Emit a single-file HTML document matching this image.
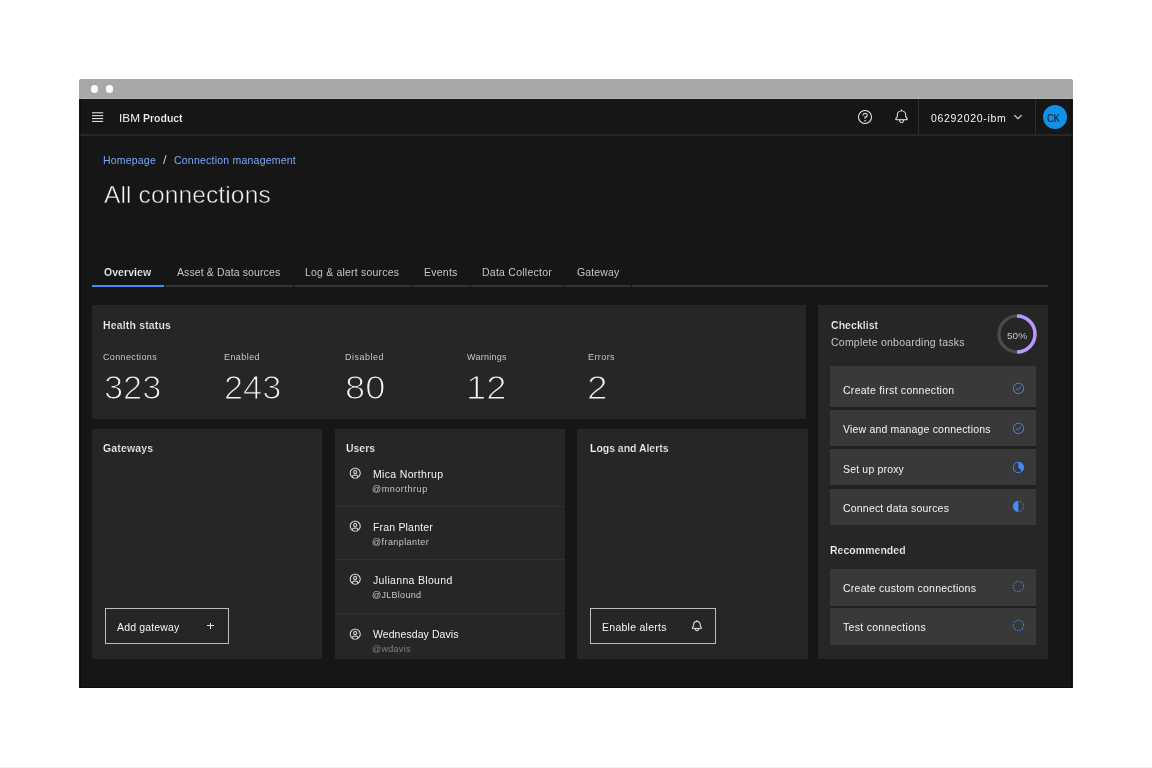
<!DOCTYPE html>
<html><head><meta charset="utf-8"><title>All connections</title>
<style>
html,body{margin:0;padding:0}
body{width:1152px;height:768px;background:#fff;position:relative;overflow:hidden;font-family:"Liberation Sans",sans-serif}
.a{position:absolute}
.t{position:absolute;white-space:pre;font-family:"Liberation Sans",sans-serif;will-change:transform}
.card{position:absolute;background:#262626}
.item{position:absolute;background:#393939;left:830px;width:206px}
.sep{position:absolute;height:1px;background:#313131}
svg{position:absolute;overflow:visible}
</style></head><body>
<!-- browser frame -->
<div class="a" style="left:79px;top:79px;width:994px;height:21px;background:#a8a8a8;border-radius:2px 2px 0 0"></div>
<div class="a" style="left:79px;top:98px;width:994px;height:1px;background:#b2b2b2"></div>
<div class="a" style="left:90.7px;top:85.25px;width:7.5px;height:7.5px;border-radius:50%;background:#fff"></div>
<div class="a" style="left:105.7px;top:85.25px;width:7.5px;height:7.5px;border-radius:50%;background:#fff"></div>
<div class="a" style="left:79px;top:99px;width:993.5px;height:589px;background:#161616"></div>
<div class="a" style="left:80px;top:99px;width:1px;height:589px;background:#0c0c0c"></div>
<div class="a" style="left:1071px;top:99px;width:1px;height:589px;background:#0e0e0e"></div>
<div class="a" style="left:79px;top:687px;width:993px;height:1px;background:#0c0c0c"></div>
<div class="a" style="left:0;top:767px;width:1152px;height:1px;background:#efefef"></div>
<!-- header -->
<div class="a" style="left:79px;top:134px;width:994px;height:2px;background:#262626"></div>
<div class="a" style="left:918px;top:99px;width:1px;height:35px;background:#2e2e2e"></div>
<div class="a" style="left:1034.6px;top:99px;width:1px;height:35px;background:#2e2e2e"></div>
<svg style="left:90px;top:110px" width="15" height="15" viewBox="0 0 15 15" fill="#f4f4f4"><rect x="2" y="2.3" width="11.2" height="1"/><rect x="2" y="5.2" width="11.2" height="1"/><rect x="2" y="8.1" width="11.2" height="1"/><rect x="2" y="10.9" width="11.2" height="1"/></svg>
<svg style="left:857px;top:109px" width="16" height="16" viewBox="0 0 32 32" fill="#f4f4f4"><path d="M16,2A14,14,0,1,0,30,16,14,14,0,0,0,16,2Zm0,26A12,12,0,1,1,28,16,12,12,0,0,1,16,28Z"/><circle cx="16" cy="23.5" r="1.5"/><path d="M17,8H15.5A4.49,4.49,0,0,0,11,12.5V13h2v-.5A2.5,2.5,0,0,1,15.5,10H17a2.5,2.5,0,0,1,0,5H15v4.5h2V17a4.5,4.5,0,0,0,0-9Z"/></svg>
<svg style="left:894.3px;top:109.4px" width="15" height="15" viewBox="0 0 32 32" fill="#f4f4f4"><path d="M28.7071,19.293,26,16.5859V13a10.0136,10.0136,0,0,0-9-9.9492V1H15V3.0508A10.0136,10.0136,0,0,0,6,13v3.5859L3.2929,19.293A1,1,0,0,0,3,20v3a1,1,0,0,0,1,1h7v.7768a5.152,5.152,0,0,0,4.5,5.1987A5.0057,5.0057,0,0,0,21,25V24h7a1,1,0,0,0,1-1V20A1,1,0,0,0,28.7071,19.293ZM19,25a3,3,0,0,1-6,0V24h6Zm8-3H5V20.4141L7.707,17.707A1,1,0,0,0,8,17V13a8,8,0,0,1,16,0v4a1,1,0,0,0,.293.707L27,20.4141Z"/></svg>
<svg style="left:1012.25px;top:111.3px" width="12" height="12" viewBox="0 0 16 16" fill="#f4f4f4" stroke="#f4f4f4" stroke-width="0.5"><path d="M8 11L3 6 3.7 5.3 8 9.6 12.3 5.3 13 6z"/></svg>
<div class="a" style="left:1042.6px;top:105.1px;width:24px;height:24px;border-radius:50%;background:#1192e8"></div>
<!-- tabs -->
<div class="a" style="left:92px;top:285px;width:956px;height:2px;background:#353535"></div>
<div class="a" style="left:164px;top:285px;width:1px;height:2px;background:#161616"></div>
<div class="a" style="left:293px;top:285px;width:1px;height:2px;background:#161616"></div>
<div class="a" style="left:411px;top:285px;width:1px;height:2px;background:#161616"></div>
<div class="a" style="left:470px;top:285px;width:1px;height:2px;background:#161616"></div>
<div class="a" style="left:564px;top:285px;width:1px;height:2px;background:#161616"></div>
<div class="a" style="left:631px;top:285px;width:1px;height:2px;background:#161616"></div>
<div class="a" style="left:92px;top:285px;width:72px;height:2px;background:#4589ff"></div>
<!-- cards -->
<div class="card" style="left:92px;top:305px;width:714px;height:113.5px"></div>
<div class="card" style="left:818px;top:305px;width:230px;height:353.5px"></div>
<div class="card" style="left:92px;top:428.5px;width:230px;height:230px"></div>
<div class="card" style="left:334.5px;top:428.5px;width:230.5px;height:230px"></div>
<div class="card" style="left:577.3px;top:428.5px;width:230.5px;height:230px"></div>
<!-- progress ring -->
<svg style="left:996.6px;top:314.35px" width="40" height="40" viewBox="0 0 40 40"><circle cx="20" cy="20" r="18" fill="none" stroke="#4c4c4c" stroke-width="3.2"/><path d="M20 2A18 18 0 0 1 20 38" fill="none" stroke="#be95ff" stroke-width="3.5"/></svg>
<!-- checklist items -->
<div class="a" style="left:830px;top:400px;width:206px;height:100px;background:#202020"></div>
<div class="a" style="left:830px;top:590px;width:206px;height:30px;background:#202020"></div>
<div class="item" style="top:366px;height:40.7px"></div>
<div class="item" style="top:409.8px;height:36.2px"></div>
<div class="item" style="top:449.4px;height:36.1px"></div>
<div class="item" style="top:488.9px;height:36px"></div>
<div class="item" style="top:569px;height:36.6px"></div>
<div class="item" style="top:608.1px;height:36.6px"></div>
<!-- item icons -->
<svg style="left:1011.9px;top:382.1px" width="12.8" height="12.8" viewBox="0 0 32 32" fill="#4589ff"><path d="M14 21.414L9 16.413 10.413 15 14 18.586 21.585 11 23 12.415 14 21.414z"/><path d="M16,2A14,14,0,1,0,30,16,14,14,0,0,0,16,2Zm0,26A12,12,0,1,1,28,16,12,12,0,0,1,16,28Z"/></svg>
<svg style="left:1011.9px;top:421.5px" width="12.8" height="12.8" viewBox="0 0 32 32" fill="#4589ff"><path d="M14 21.414L9 16.413 10.413 15 14 18.586 21.585 11 23 12.415 14 21.414z"/><path d="M16,2A14,14,0,1,0,30,16,14,14,0,0,0,16,2Zm0,26A12,12,0,1,1,28,16,12,12,0,0,1,16,28Z"/></svg>
<svg style="left:1011.9px;top:461.1px" width="12.8" height="12.8" viewBox="0 0 32 32" fill="#4589ff"><path d="M16,2A14,14,0,1,0,30,16,14.0158,14.0158,0,0,0,16,2Zm0,26A12,12,0,0,1,16,4V16l8.4812,8.4814A11.9625,11.9625,0,0,1,16,28Z"/></svg>
<svg style="left:1011.9px;top:500.4px" width="12.8" height="12.8" viewBox="0 0 32 32" fill="#4589ff"><path d="M23.7642 6.8593l1.2851-1.5315A13.976 13.976 0 0020.4792 2.78l-.6836 1.8776A11.9729 11.9729 0 0123.7642 6.8593zM27.81 14l1.9677-.4128A13.8888 13.8888 0 0028.14 9.0457L26.4087 10A12.52 12.52 0 0127.81 14zM20.4792 29.22l-.6836-1.8776a11.9727 11.9727 0 003.9689-2.2818l1.2851 1.5315A13.976 13.976 0 0120.4792 29.22zM26.4087 22L28.14 23a14.14 14.14 0 001.6382-4.5872L27.81 18.0659A12.0002 12.0002 0 0126.4087 22zM16 30V2a14 14 0 000 28z"/></svg>
<svg style="left:1011.9px;top:580.4px" width="12.8" height="12.8" viewBox="0 0 32 32"><circle cx="16" cy="16" r="13" fill="none" stroke="#4589ff" stroke-width="2.6" stroke-dasharray="3.4 3.4"/></svg>
<svg style="left:1011.9px;top:619.2px" width="12.8" height="12.8" viewBox="0 0 32 32"><circle cx="16" cy="16" r="13" fill="none" stroke="#4589ff" stroke-width="2.6" stroke-dasharray="3.4 3.4"/></svg>
<!-- users -->
<div class="sep" style="left:334.5px;top:505.5px;width:230.5px"></div>
<div class="sep" style="left:334.5px;top:558.5px;width:230.5px"></div>
<div class="sep" style="left:334.5px;top:613px;width:230.5px"></div>
<svg style="left:348.80px;top:467.40px" width="12.4" height="12.4" viewBox="0 0 32 32" fill="#f4f4f4" stroke="#f4f4f4" stroke-width="0.45"><path d="M16,8a5,5,0,1,0,5,5A5,5,0,0,0,16,8Zm0,8a3,3,0,1,1,3-3A3.0034,3.0034,0,0,1,16,16Z"/><path d="M16,2A14,14,0,1,0,30,16,14.0158,14.0158,0,0,0,16,2ZM10,26.3765V25a3.0033,3.0033,0,0,1,3-3h6a3.0033,3.0033,0,0,1,3,3v1.3765a11.8989,11.8989,0,0,1-12,0Zm13.9925-1.4507A5.0016,5.0016,0,0,0,19,20H13a5.0016,5.0016,0,0,0-4.9925,4.9258,12,12,0,1,1,15.985,0Z"/></svg>
<svg style="left:348.80px;top:520.10px" width="12.4" height="12.4" viewBox="0 0 32 32" fill="#f4f4f4" stroke="#f4f4f4" stroke-width="0.45"><path d="M16,8a5,5,0,1,0,5,5A5,5,0,0,0,16,8Zm0,8a3,3,0,1,1,3-3A3.0034,3.0034,0,0,1,16,16Z"/><path d="M16,2A14,14,0,1,0,30,16,14.0158,14.0158,0,0,0,16,2ZM10,26.3765V25a3.0033,3.0033,0,0,1,3-3h6a3.0033,3.0033,0,0,1,3,3v1.3765a11.8989,11.8989,0,0,1-12,0Zm13.9925-1.4507A5.0016,5.0016,0,0,0,19,20H13a5.0016,5.0016,0,0,0-4.9925,4.9258,12,12,0,1,1,15.985,0Z"/></svg>
<svg style="left:348.80px;top:573.30px" width="12.4" height="12.4" viewBox="0 0 32 32" fill="#f4f4f4" stroke="#f4f4f4" stroke-width="0.45"><path d="M16,8a5,5,0,1,0,5,5A5,5,0,0,0,16,8Zm0,8a3,3,0,1,1,3-3A3.0034,3.0034,0,0,1,16,16Z"/><path d="M16,2A14,14,0,1,0,30,16,14.0158,14.0158,0,0,0,16,2ZM10,26.3765V25a3.0033,3.0033,0,0,1,3-3h6a3.0033,3.0033,0,0,1,3,3v1.3765a11.8989,11.8989,0,0,1-12,0Zm13.9925-1.4507A5.0016,5.0016,0,0,0,19,20H13a5.0016,5.0016,0,0,0-4.9925,4.9258,12,12,0,1,1,15.985,0Z"/></svg>
<svg style="left:348.80px;top:627.70px" width="12.4" height="12.4" viewBox="0 0 32 32" fill="#f4f4f4" stroke="#f4f4f4" stroke-width="0.45"><path d="M16,8a5,5,0,1,0,5,5A5,5,0,0,0,16,8Zm0,8a3,3,0,1,1,3-3A3.0034,3.0034,0,0,1,16,16Z"/><path d="M16,2A14,14,0,1,0,30,16,14.0158,14.0158,0,0,0,16,2ZM10,26.3765V25a3.0033,3.0033,0,0,1,3-3h6a3.0033,3.0033,0,0,1,3,3v1.3765a11.8989,11.8989,0,0,1-12,0Zm13.9925-1.4507A5.0016,5.0016,0,0,0,19,20H13a5.0016,5.0016,0,0,0-4.9925,4.9258,12,12,0,1,1,15.985,0Z"/></svg>

<!-- buttons -->
<div class="a" style="left:105px;top:607.5px;width:122.3px;height:34.8px;border:1px solid #bdbdbd"></div>
<div class="a" style="left:590.3px;top:607.5px;width:123.4px;height:34.8px;border:1px solid #bdbdbd"></div>
<div class="a" style="left:207.1px;top:625.4px;width:7px;height:1.1px;background:#e6e6e6"></div><div class="a" style="left:210.05px;top:622.6px;width:1.1px;height:6.6px;background:#e6e6e6"></div>
<svg style="left:691.1px;top:620px" width="11.8" height="11.8" viewBox="0 0 32 32" fill="#f4f4f4" stroke="#f4f4f4" stroke-width="0.6"><path d="M28.7071,19.293,26,16.5859V13a10.0136,10.0136,0,0,0-9-9.9492V1H15V3.0508A10.0136,10.0136,0,0,0,6,13v3.5859L3.2929,19.293A1,1,0,0,0,3,20v3a1,1,0,0,0,1,1h7v.7768a5.152,5.152,0,0,0,4.5,5.1987A5.0057,5.0057,0,0,0,21,25V24h7a1,1,0,0,0,1-1V20A1,1,0,0,0,28.7071,19.293ZM19,25a3,3,0,0,1-6,0V24h6Zm8-3H5V20.4141L7.707,17.707A1,1,0,0,0,8,17V13a8,8,0,0,1,16,0v4a1,1,0,0,0,.293.707L27,20.4141Z"/></svg>
<div class="t" style="left:118.78px;top:113.10px;font-size:10.5px;line-height:10.5px;font-weight:400;color:#f4f4f4;letter-spacing:0.000px;transform:scaleX(1.1235);transform-origin:0 0">IBM</div>
<div class="t" style="left:142.75px;top:113.10px;font-size:10.5px;line-height:10.5px;font-weight:700;color:#f4f4f4;letter-spacing:-0.008px;;-webkit-text-stroke:0.2px #161616">Product</div>
<div class="t" style="left:931.45px;top:112.90px;font-size:10.5px;line-height:10.5px;font-weight:400;color:#f4f4f4;letter-spacing:0.686px;">06292020-ibm</div>
<div class="t" style="left:1047.46px;top:112.90px;font-size:10.5px;line-height:10.5px;font-weight:400;color:#161616;letter-spacing:0.000px;transform:scaleX(0.8857);transform-origin:0 0">CK</div>
<div class="t" style="left:103.35px;top:155.10px;font-size:10.5px;line-height:10.5px;font-weight:400;color:#78a9ff;letter-spacing:0.193px;">Homepage</div>
<div class="t" style="left:162.80px;top:154.20px;font-size:12.9px;line-height:12.9px;font-weight:400;color:#c6c6c6;letter-spacing:0.200px;">/</div>
<div class="t" style="left:173.80px;top:155.10px;font-size:10.5px;line-height:10.5px;font-weight:400;color:#78a9ff;letter-spacing:0.222px;">Connection management</div>
<div class="t" style="left:104.40px;top:183.25px;font-size:24.5px;line-height:24.5px;font-weight:400;color:#f4f4f4;letter-spacing:0.132px;-webkit-text-stroke:0.5px #161616">All connections</div>
<div class="t" style="left:104.20px;top:267.30px;font-size:10.5px;line-height:10.5px;font-weight:700;color:#f4f4f4;letter-spacing:0.050px;;-webkit-text-stroke:0.2px #262626">Overview</div>
<div class="t" style="left:176.70px;top:267.30px;font-size:10.5px;line-height:10.5px;font-weight:400;color:#c6c6c6;letter-spacing:0.116px;">Asset &amp; Data sources</div>
<div class="t" style="left:305.05px;top:267.30px;font-size:10.5px;line-height:10.5px;font-weight:400;color:#c6c6c6;letter-spacing:0.192px;">Log &amp; alert sources</div>
<div class="t" style="left:423.55px;top:267.30px;font-size:10.5px;line-height:10.5px;font-weight:400;color:#c6c6c6;letter-spacing:0.240px;">Events</div>
<div class="t" style="left:481.55px;top:267.30px;font-size:10.5px;line-height:10.5px;font-weight:400;color:#c6c6c6;letter-spacing:0.250px;">Data Collector</div>
<div class="t" style="left:576.60px;top:267.30px;font-size:10.5px;line-height:10.5px;font-weight:400;color:#c6c6c6;letter-spacing:0.117px;">Gateway</div>
<div class="t" style="left:102.95px;top:320.30px;font-size:10.5px;line-height:10.5px;font-weight:700;color:#f4f4f4;letter-spacing:0.163px;;-webkit-text-stroke:0.2px #262626">Health status</div>
<div class="t" style="left:103.20px;top:353.20px;font-size:9px;line-height:9px;font-weight:400;color:#c6c6c6;letter-spacing:0.365px;">Connections</div>
<div class="t" style="left:224.15px;top:353.20px;font-size:9px;line-height:9px;font-weight:400;color:#c6c6c6;letter-spacing:0.425px;">Enabled</div>
<div class="t" style="left:345.35px;top:353.20px;font-size:9px;line-height:9px;font-weight:400;color:#c6c6c6;letter-spacing:0.507px;">Disabled</div>
<div class="t" style="left:467.20px;top:353.20px;font-size:9px;line-height:9px;font-weight:400;color:#c6c6c6;letter-spacing:0.271px;">Warnings</div>
<div class="t" style="left:587.55px;top:353.20px;font-size:9px;line-height:9px;font-weight:400;color:#c6c6c6;letter-spacing:0.420px;">Errors</div>
<div class="t" style="left:103.95px;top:371.50px;font-size:32.5px;line-height:32.5px;font-weight:400;color:#f4f4f4;letter-spacing:0.000px;-webkit-text-stroke:1.1px #262626;transform:scaleX(1.0574);transform-origin:0 0">323</div>
<div class="t" style="left:224.22px;top:371.50px;font-size:32.5px;line-height:32.5px;font-weight:400;color:#f4f4f4;letter-spacing:0.000px;-webkit-text-stroke:1.1px #262626;transform:scaleX(1.0560);transform-origin:0 0">243</div>
<div class="t" style="left:344.67px;top:371.50px;font-size:32.5px;line-height:32.5px;font-weight:400;color:#f4f4f4;letter-spacing:0.000px;-webkit-text-stroke:1.1px #262626;transform:scaleX(1.1163);transform-origin:0 0">80</div>
<div class="t" style="left:465.94px;top:371.50px;font-size:32.5px;line-height:32.5px;font-weight:400;color:#f4f4f4;letter-spacing:0.000px;-webkit-text-stroke:1.1px #262626;transform:scaleX(1.1194);transform-origin:0 0">12</div>
<div class="t" style="left:587.03px;top:371.50px;font-size:32.5px;line-height:32.5px;font-weight:400;color:#f4f4f4;letter-spacing:0.000px;-webkit-text-stroke:1.1px #262626;transform:scaleX(1.1418);transform-origin:0 0">2</div>
<div class="t" style="left:831.00px;top:320.30px;font-size:10.5px;line-height:10.5px;font-weight:700;color:#f4f4f4;letter-spacing:0.050px;;-webkit-text-stroke:0.2px #262626">Checklist</div>
<div class="t" style="left:830.90px;top:337.10px;font-size:10.5px;line-height:10.5px;font-weight:400;color:#c6c6c6;letter-spacing:0.233px;">Complete onboarding tasks</div>
<div class="t" style="left:1007.19px;top:332.20px;font-size:9px;line-height:9px;font-weight:400;color:#c6c6c6;letter-spacing:0.000px;transform:scaleX(1.1217);transform-origin:0 0">50%</div>
<div class="t" style="left:842.80px;top:385.00px;font-size:10.5px;line-height:10.5px;font-weight:400;color:#f4f4f4;letter-spacing:0.277px;">Create first connection</div>
<div class="t" style="left:843.30px;top:424.40px;font-size:10.5px;line-height:10.5px;font-weight:400;color:#f4f4f4;letter-spacing:0.181px;">View and manage connections</div>
<div class="t" style="left:842.80px;top:464.00px;font-size:10.5px;line-height:10.5px;font-weight:400;color:#f4f4f4;letter-spacing:0.173px;">Set up proxy</div>
<div class="t" style="left:842.80px;top:503.30px;font-size:10.5px;line-height:10.5px;font-weight:400;color:#f4f4f4;letter-spacing:0.197px;">Connect data sources</div>
<div class="t" style="left:829.85px;top:545.30px;font-size:10.5px;line-height:10.5px;font-weight:700;color:#f4f4f4;letter-spacing:0.030px;;-webkit-text-stroke:0.2px #262626">Recommended</div>
<div class="t" style="left:842.80px;top:583.30px;font-size:10.5px;line-height:10.5px;font-weight:400;color:#f4f4f4;letter-spacing:0.238px;">Create custom connections</div>
<div class="t" style="left:843.05px;top:622.10px;font-size:10.5px;line-height:10.5px;font-weight:400;color:#f4f4f4;letter-spacing:0.300px;">Test connections</div>
<div class="t" style="left:103.20px;top:443.30px;font-size:10.5px;line-height:10.5px;font-weight:700;color:#f4f4f4;letter-spacing:0.136px;;-webkit-text-stroke:0.2px #262626">Gateways</div>
<div class="t" style="left:346.40px;top:443.30px;font-size:10.5px;line-height:10.5px;font-weight:700;color:#f4f4f4;letter-spacing:-0.037px;;-webkit-text-stroke:0.2px #262626">Users</div>
<div class="t" style="left:589.65px;top:443.30px;font-size:10.5px;line-height:10.5px;font-weight:700;color:#f4f4f4;letter-spacing:-0.032px;;-webkit-text-stroke:0.2px #262626">Logs and Alerts</div>
<div class="t" style="left:372.65px;top:469.10px;font-size:10.5px;line-height:10.5px;font-weight:400;color:#f4f4f4;letter-spacing:0.338px;">Mica Northrup</div>
<div class="t" style="left:372.45px;top:485.00px;font-size:9px;line-height:9px;font-weight:400;color:#c6c6c6;letter-spacing:0.556px;">@mnorthrup</div>
<div class="t" style="left:372.65px;top:521.80px;font-size:10.5px;line-height:10.5px;font-weight:400;color:#f4f4f4;letter-spacing:0.182px;">Fran Planter</div>
<div class="t" style="left:372.45px;top:537.80px;font-size:9px;line-height:9px;font-weight:400;color:#c6c6c6;letter-spacing:0.414px;">@franplanter</div>
<div class="t" style="left:372.75px;top:575.00px;font-size:10.5px;line-height:10.5px;font-weight:400;color:#f4f4f4;letter-spacing:0.325px;">Julianna Blound</div>
<div class="t" style="left:372.45px;top:590.90px;font-size:9px;line-height:9px;font-weight:400;color:#c6c6c6;letter-spacing:0.288px;">@JLBlound</div>
<div class="t" style="left:373.00px;top:629.40px;font-size:10.5px;line-height:10.5px;font-weight:400;color:#f4f4f4;letter-spacing:0.071px;">Wednesday Davis</div>
<div class="t" style="left:372.45px;top:645.40px;font-size:9px;line-height:9px;font-weight:400;color:#808080;letter-spacing:0.300px;">@wdavis</div>
<div class="t" style="left:117.30px;top:622.00px;font-size:10.5px;line-height:10.5px;font-weight:400;color:#f4f4f4;letter-spacing:0.165px;">Add gateway</div>
<div class="t" style="left:601.85px;top:622.00px;font-size:10.5px;line-height:10.5px;font-weight:400;color:#f4f4f4;letter-spacing:0.271px;">Enable alerts</div>
</body></html>
